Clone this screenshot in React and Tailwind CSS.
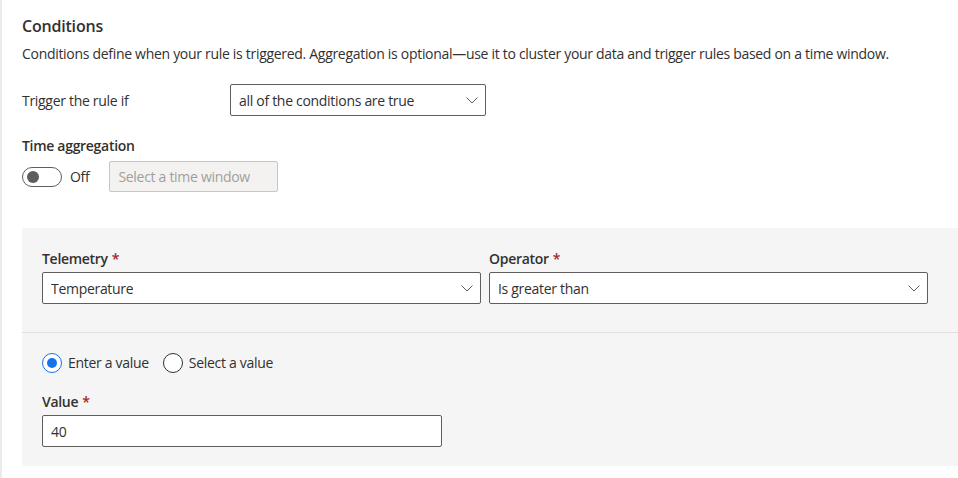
import React from 'react';

const FONT = { fontFamily: '"Segoe UI", "Open Sans", sans-serif' };

function Chevron() {
    return (
        <svg width="12" height="7" viewBox="0 0 12 7" fill="none" aria-hidden="true">
            <path d="M0.5 0.5 L6 6 L11.5 0.5" stroke="#605e5c" strokeWidth="1" />
        </svg>
    );
}

function Dropdown({ value, className }) {
    return (
        <div
            className={`h-8 flex items-center justify-between pl-2 pr-[7px] bg-white border border-[#605e5c] rounded-[2px] ${className}`}
        >
            <span className="text-[14px] text-[#323130] truncate">{value}</span>
            <Chevron />
        </div>
    );
}

function Label({ children, required }) {
    return (
        <div className="text-[14px] font-semibold text-[#323130] leading-5 mb-[3px]">
            {children}
            {required && <span className="text-[#a4262c] pl-1">*</span>}
        </div>
    );
}

function Radio({ checked, label }) {
    return (
        <label className="flex items-center gap-[6px] cursor-pointer">
            <span
                className={`w-5 h-5 rounded-full border bg-white flex items-center justify-center ${
                    checked ? 'border-[#1672ec]' : 'border-[#323130]'
                }`}
            >
                {checked && <span className="w-[10px] h-[10px] rounded-full bg-[#1672ec]" />}
            </span>
            <span className="text-[14px] text-[#323130]">{label}</span>
        </label>
    );
}

export default function App() {
    return (
        <div className="w-[958px] h-[478px] bg-white overflow-hidden flex tracking-[-0.3px]" style={FONT}>
            {/* left edge rule */}
            <div className="w-[2px] bg-[#ebebeb] shrink-0" />

            <div className="flex-1 pl-5 pt-[15px]">
                {/* ── Header ── */}
                <h2 className="text-[16px] font-semibold text-[#323130] leading-[22px] tracking-[-0.2px]">Conditions</h2>
                <p className="text-[14px] text-[#323130] leading-5 mt-[7px]">
                    Conditions define when your rule is triggered. Aggregation is optional—use it to cluster your data and trigger rules based on a time window.
                </p>

                {/* ── Trigger row ── */}
                <div className="flex items-center mt-[20px]">
                    <span className="w-[208px] text-[14px] text-[#323130]">Trigger the rule if</span>
                    <Dropdown value="all of the conditions are true" className="w-[256px]" />
                </div>

                {/* ── Time aggregation ── */}
                <div className="mt-[20px] text-[14px] font-semibold text-[#323130] leading-5">Time aggregation</div>
                <div className="flex items-center mt-[5px]">
                    <span className="w-10 h-5 rounded-full border border-[#605e5c] bg-white flex items-center px-[4px]">
                        <span className="w-3 h-3 rounded-full bg-[#605e5c]" />
                    </span>
                    <span className="ml-2 text-[14px] text-[#323130]">Off</span>
                    <div className="ml-5 w-[169px] h-[31px] flex items-center px-2 bg-[#f3f2f1] border border-[#c8c6c4] rounded-[2px] text-[14px] text-[#a19f9d]">
                        Select a time window
                    </div>
                </div>

                {/* ── Condition card ── */}
                <div className="mt-[36px] bg-[#f5f5f5] rounded-l-[3px] h-[238px]">
                    <div className="grid grid-cols-[439px_439px] gap-x-2 px-5 pt-[21px] pb-[28px]">
                        <div>
                            <Label required>Telemetry</Label>
                            <Dropdown value="Temperature" />
                        </div>
                        <div>
                            <Label required>Operator</Label>
                            <Dropdown value="Is greater than" />
                        </div>
                    </div>
                    <div className="h-px bg-[#e1dfdd]" />
                    <div className="px-5 pt-[19px]">
                        <div className="flex items-center gap-[14px]">
                            <Radio checked label="Enter a value" />
                            <Radio label="Select a value" />
                        </div>
                        <div className="mt-[19px]">
                            <Label required>Value</Label>
                            <div className="w-[400px] h-8 flex items-center px-2 bg-white border border-[#605e5c] rounded-[2px] text-[14px] text-[#323130]">
                                40
                            </div>
                        </div>
                    </div>
                </div>
            </div>
        </div>
    );
}
